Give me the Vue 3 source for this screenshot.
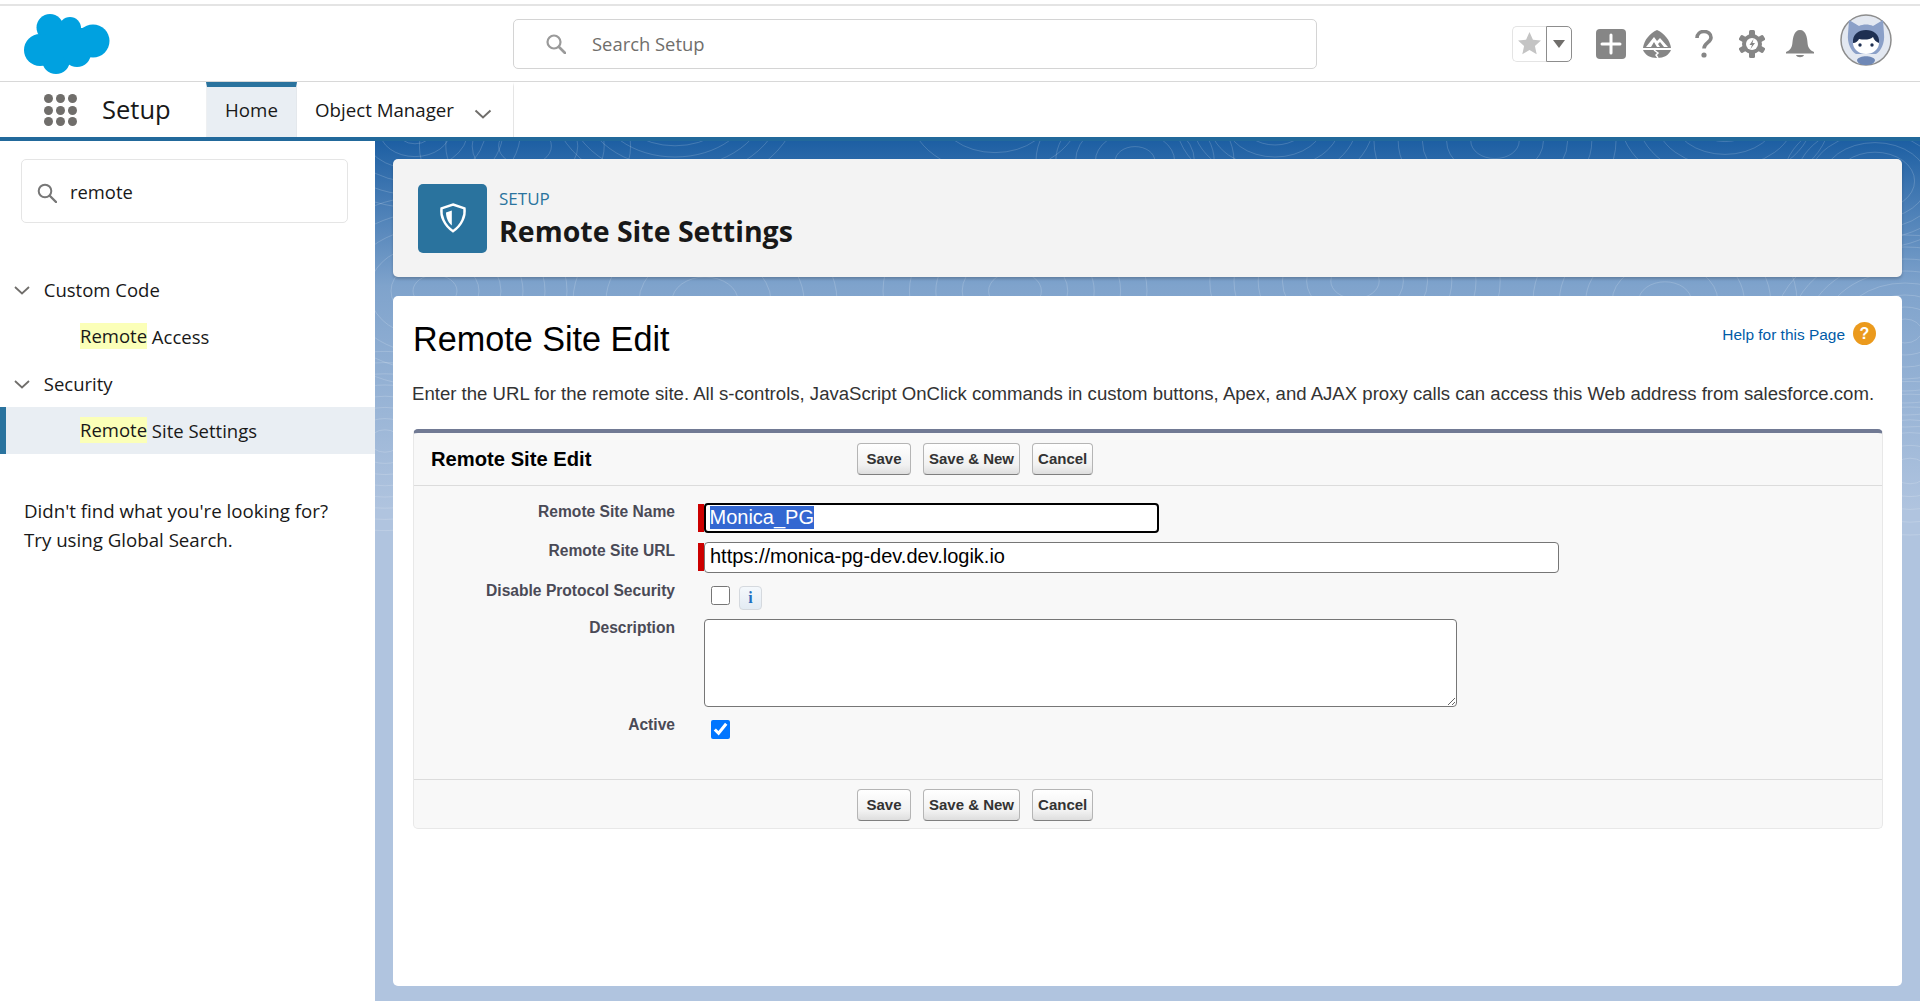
<script setup>
import { ref, onMounted } from 'vue'

// 背景等高线：几组同心椭圆，只在卡片之间的缝隙里露出来
const contours = []
const groups = [
  [40, -10, 6, 16], [150, 5, 4, 24], [300, -40, 8, 14], [620, -30, 3, 26], [760, 20, 5, 18],
  [900, -20, 6, 15], [1120, 0, 5, 22], [1350, -25, 6, 16], [1500, 40, 7, 12],
  [60, 150, 6, 20], [330, 160, 4, 30], [640, 150, 5, 24], [980, 140, 6, 22], [1290, 160, 5, 24], [1530, 190, 8, 15],
  [10, 300, 8, 14], [1535, 330, 7, 16],
]
groups.forEach(([cx, cy, n, step]) => {
  for (let i = 1; i <= n; i++) {
    contours.push({ cx, cy, rx: i * step * 1.1, ry: i * step * 0.8 })
  }
})

const nameInput = ref(null)
onMounted(() => {
  nameInput.value.focus()
  nameInput.value.select()
})
</script>

<template>
  <div class="page">
    <header class="topbar">
      <div class="logo-wrap">
        <svg class="logo" viewBox="0 0 86 60" width="86" height="60" aria-label="Salesforce">
          <g fill="#00a1e0">
            <circle cx="26" cy="13.500" r="13.500" />
            <circle cx="46" cy="14" r="11" />
            <circle cx="69" cy="27" r="16.500" />
            <circle cx="16" cy="36" r="16" />
            <circle cx="32" cy="46" r="14" />
            <circle cx="53" cy="39" r="14" />
            <rect x="22" y="14" width="40" height="28" />
          </g>
        </svg>
      </div>
      <div class="global-search">
        <svg class="gs-icon" viewBox="0 0 20 20" width="20" height="20">
          <circle cx="8" cy="8" r="6.500" fill="none" stroke="#9a9a9a" stroke-width="2.200" />
          <path d="M13 13l6 6" stroke="#9a9a9a" stroke-width="2.600" stroke-linecap="round" />
        </svg>
        <span>Search Setup</span>
      </div>
      <div class="actions">
        <div class="fav">
          <span class="fav-star">
            <svg viewBox="0 0 24 24" width="25" height="25"><path fill="#c4c4c4" d="M12 1l3.300 7.300 7.700.8-5.800 5.300 1.700 7.900-6.900-4.100-6.900 4.100 1.700-7.900L1 9.100l7.700-.8z" /></svg>
          </span>
          <span class="fav-drop"><i></i></span>
        </div>
        <svg class="plus" viewBox="0 0 30 30" width="30" height="30">
          <rect width="30" height="30" rx="4" fill="#868686" />
          <path d="M15 6v18M6 15h18" stroke="#fff" stroke-width="3" stroke-linecap="round" />
        </svg>
        <svg class="trail" viewBox="0 0 30 28" width="30" height="28">
          <path fill="#868686" d="M15 0c7 3 13 10 14 18H1C2 10 8 3 15 0z" />
          <path fill="#fff" d="M4 17l8-10 3 4 3-3 8 9h-4l-4-5-2 2 2 3h-3l-3-5-3 5z" />
          <path fill="#868686" d="M1 20h28c-2 5-7 8-14 8S3 25 1 20z" />
          <path d="M12 20l4 3-2 2 2 3" fill="none" stroke="#fff" stroke-width="1.500" />
        </svg>
        <svg class="help" viewBox="0 0 20 28" width="20" height="28">
          <path d="M3 8c0-4 3-6.500 7-6.500s7 2.500 7 6c0 5-7 5.500-7 11" fill="none" stroke="#868686" stroke-width="3.600" />
          <circle cx="10" cy="25" r="2.600" fill="#868686" />
        </svg>
        <svg class="gear" viewBox="0 0 26 28" width="26" height="28">
          <g fill="#868686">
            <circle cx="13" cy="14" r="10" />
            <rect x="10" y="0" width="6" height="28" rx="1.500" />
            <rect x="10" y="0" width="6" height="28" rx="1.500" transform="rotate(60 13 14)" />
            <rect x="10" y="0" width="6" height="28" rx="1.500" transform="rotate(120 13 14)" />
          </g>
          <circle cx="13" cy="14" r="6" fill="#fff" />
          <path fill="#868686" d="M14.500 9l-4 6h2.500l-1.500 4 4.500-6h-2.500z" />
        </svg>
        <svg class="bell" viewBox="0 0 30 28" width="30" height="28">
          <path fill="#868686" d="M15 0c3 0 5 2 6 5 2 5 1 10 3 13 1 2 3 3 5 4v1.500H1V22c2-1 4-2 5-4 2-3 1-8 3-13 1-3 3-5 6-5z" />
          <path fill="#868686" d="M11 25h8c-1 3-7 3-8 0z" />
        </svg>
        <svg class="avatar" viewBox="0 0 52 52" width="52" height="52">
          <circle cx="26" cy="26" r="25" fill="#e3e8f1" stroke="#8d8d8d" stroke-width="1.500" />
          <path fill="#8ba0c8" d="M9 6l10 6c4-2 10-2 14 0l10-6 1 14c1 9-3 17-8 20H16c-5-3-9-11-8-20z" />
          <path fill="#6f88b6" d="M17 46c2-5 16-5 18 0 0 3-4 5-9 5s-9-2-9-5z" />
          <ellipse cx="26" cy="29" rx="13" ry="11" fill="#fff" />
          <path fill="#1e2f52" d="M13 29c-1-9 6-13 13-13s14 4 13 13c-3-1-5-3-6-6-3 3-9 3-14 2-1 2-3 4-6 4z" />
          <circle cx="20" cy="31" r="1.700" fill="#1e2f52" />
          <circle cx="32" cy="31" r="1.700" fill="#1e2f52" />
        </svg>
      </div>
    </header>

    <nav class="tabbar">
      <div class="launcher">
        <i v-for="n in 9" :key="n"></i>
      </div>
      <span class="app-name">Setup</span>
      <a class="tab active">Home</a>
      <a class="tab">
        Object Manager
        <svg viewBox="0 0 18 10" width="18" height="10"><path d="M1.500 1.500L9 8.500l7.500-7" fill="none" stroke="#706e6b" stroke-width="2" /></svg>
      </a>
    </nav>

    <div class="layout">
      <aside class="sidebar">
        <div class="quickfind">
          <svg viewBox="0 0 20 20" width="20" height="20">
            <circle cx="8" cy="8" r="6.300" fill="none" stroke="#777" stroke-width="2" />
            <path d="M13 13l6 6" stroke="#777" stroke-width="2.400" stroke-linecap="round" />
          </svg>
          <span>remote</span>
        </div>

        <ul class="tree">
          <li class="group">
            <svg viewBox="0 0 16 9" width="16" height="9"><path d="M1 1l7 6.500L15 1" fill="none" stroke="#706e6b" stroke-width="1.800" /></svg>
            Custom Code
          </li>
          <li class="leaf"><mark>Remote</mark> Access</li>
          <li class="group">
            <svg viewBox="0 0 16 9" width="16" height="9"><path d="M1 1l7 6.500L15 1" fill="none" stroke="#706e6b" stroke-width="1.800" /></svg>
            Security
          </li>
          <li class="leaf selected"><mark>Remote</mark> Site Settings</li>
        </ul>

        <p class="notfound">Didn't find what you're looking for?<br />Try using Global Search.</p>
      </aside>

      <main class="content">
        <svg class="topo" width="1545" height="400">
          <ellipse
            v-for="(c, i) in contours"
            :key="i"
            :cx="c.cx"
            :cy="c.cy"
            :rx="c.rx"
            :ry="c.ry"
            fill="none"
            stroke="#fff"
            stroke-opacity=".17"
          />
        </svg>

        <section class="page-head">
          <div class="head-icon">
            <svg viewBox="0 0 30 30" width="30" height="30">
              <path d="M15 1.500l11.500 3.800c1 7.500-2.500 17-11.500 23-9-6-12.500-15.500-11.500-23z" fill="none" stroke="#fff" stroke-width="2.400" />
              <path fill="#fff" d="M13.800 7.500l-5.800 2c0 5 2 10 5.800 13z" />
            </svg>
          </div>
          <div class="head-text">
            <div class="eyebrow">SETUP</div>
            <h1>Remote Site Settings</h1>
          </div>
        </section>

        <section class="card">
          <div class="card-top">
            <h2>Remote Site Edit</h2>
            <a class="help-link"><span class="help-text">Help for this Page</span> <span class="help-dot">?</span></a>
          </div>
          <p class="intro">Enter the URL for the remote site. All s-controls, JavaScript OnClick commands in custom buttons, Apex, and AJAX proxy calls can access this Web address from salesforce.com.</p>

          <div class="block">
            <div class="block-head">
              <h3>Remote Site Edit</h3>
              <div class="btns">
                <button>Save</button>
                <button>Save &amp; New</button>
                <button>Cancel</button>
              </div>
            </div>

            <div class="form">
              <label>Remote Site Name</label>
              <div class="required">
                <input ref="nameInput" class="text name" value="Monica_PG" />
              </div>

              <label>Remote Site URL</label>
              <div class="required">
                <input class="text url" value="https://monica-pg-dev.dev.logik.io" />
              </div>

              <label>Disable Protocol Security</label>
              <div class="check-row">
                <input type="checkbox" />
                <span class="info">i</span>
              </div>

              <label>Description</label>
              <div class="field"><textarea></textarea></div>

              <label>Active</label>
              <div class="check-row">
                <input type="checkbox" checked />
              </div>
            </div>

            <div class="block-foot">
              <div class="btns">
                <button>Save</button>
                <button>Save &amp; New</button>
                <button>Cancel</button>
              </div>
            </div>
          </div>
        </section>
      </main>
    </div>
  </div>
</template>

<style>
html, body { margin: 0; background: #fff; overflow: hidden; }
</style>

<style scoped>
.page {
  height: 1001px;
  display: flex;
  flex-direction: column;
  font-family: "Open Sans", "Noto Sans", sans-serif;
  color: #181818;
}

/* 顶栏 */
.topbar {
  height: 75px;
  margin-top: 4px;
  border-top: 2px solid #e4e4e4;
  border-bottom: 1px solid #d8d8d8;
  display: flex;
  align-items: center;
  flex-shrink: 0;
  background: #fff;
}
.logo-wrap { width: 513px; padding-left: 24px; box-sizing: border-box; flex-shrink: 0; height: 60px; }
.logo { display: block; }
.global-search {
  width: 804px;
  height: 50px;
  box-sizing: border-box;
  display: flex;
  align-items: center;
  gap: 26px;
  padding-left: 32px;
  border: 1px solid #d4d4d4;
  border-radius: 5px;
  color: #706e6b;
  font-size: 18.400px;
}
.global-search span { margin-top: -1px; }
.actions { display: flex; align-items: center; margin-left: 195px; }
.fav { display: flex; height: 36px; }
.fav-star {
  width: 34px;
  box-sizing: border-box;
  display: grid;
  place-items: center;
  border: 1px solid #e4e4e4;
  border-right: 0;
  border-radius: 5px 0 0 5px;
}
.fav-drop {
  width: 26px;
  box-sizing: border-box;
  display: grid;
  place-items: center;
  border: 1px solid #8d8d8d;
  border-radius: 0 5px 5px 0;
}
.fav-drop i { width: 0; height: 0; border: 6px solid transparent; border-top: 8px solid #706e6b; border-bottom: 0; }
.plus { margin-left: 24px; }
.trail { margin-left: 16px; }
.help { margin-left: 22px; }
.gear { margin-left: 25px; }
.bell { margin-left: 20px; }
.avatar { margin-left: 25px; margin-bottom: 7px; }

/* 标签栏 */
.tabbar {
  height: 59px;
  box-sizing: border-box;
  border-bottom: 4px solid #22699b;
  display: flex;
  align-items: stretch;
  flex-shrink: 0;
  padding-left: 44px;
  background: #fff;
}
.launcher {
  width: 33px;
  height: 32px;
  margin-top: 12px;
  display: grid;
  grid-template-columns: repeat(3, 9px);
  grid-auto-rows: 9px;
  justify-content: space-between;
  align-content: space-between;
}
.launcher i { border-radius: 50%; background: #706e6b; }
.app-name { margin-left: 25px; width: 104px; font-size: 25.500px; line-height: 55px; }
.tab {
  display: flex;
  align-items: center;
  font-size: 18.700px;
  border-top: 5px solid transparent;
  height: 55px;
  padding-bottom: 5px;
  box-sizing: border-box;
}
.tab.active {
  width: 91px;
  justify-content: center;
  background: #e9eef3;
  border-top-color: #2a739e;
  border-left: 1px solid #eef0f2;
  border-right: 1px solid #e4e8ec;
}
.tab:not(.active) {
  width: 217px;
  padding-left: 18px;
  box-sizing: border-box;
  border-right: 1px solid #e5e5e5;
}
.tab svg { margin-left: 20px; margin-top: 8px; }

/* 布局 */
.layout { flex: 1; display: flex; min-height: 0; }
.sidebar { width: 375px; flex-shrink: 0; background: #fff; padding-top: 18px; box-sizing: border-box; }
.quickfind {
  margin: 0 27px 0 21px;
  height: 64px;
  box-sizing: border-box;
  border: 1px solid #e5e5e5;
  border-radius: 5px;
  display: flex;
  align-items: center;
  gap: 13px;
  padding-left: 15px;
  font-size: 18.400px;
}
.quickfind svg { margin-top: 3px; }
.tree { list-style: none; margin: 42.500px 0 0; padding: 0; font-size: 18.500px; }
.tree li { height: 47px; display: flex; align-items: center; box-sizing: border-box; white-space: pre; }
.group { padding-left: 14px; }
.group svg { margin-right: 9px; margin-top: 2px; }
.leaf { padding-left: 80px; }
.leaf mark { background: #fbffb8; color: inherit; line-height: 26px; height: 26px; }
.leaf.selected { background: #e9eef3; border-left: 6px solid #2a739e; padding-left: 74px; }
.notfound { margin: 42.500px 0 0 24px; font-size: 18.700px; line-height: 29px; }

/* 主区域 */
.content {
  flex: 1;
  position: relative;
  overflow: hidden;
  padding: 18px 18px 15px;
  box-sizing: border-box;
  display: flex;
  flex-direction: column;
  gap: 19px;
  background: linear-gradient(#1d5fa3 0, #7fa3cc 145px, #b0c4df 370px);
}
.topo { position: absolute; left: 0; top: 0; }
.page-head {
  position: relative;
  height: 118px;
  flex-shrink: 0;
  background: #f3f3f3;
  border-radius: 5px;
  box-shadow: 0 2px 3px rgba(0, 0, 0, .2);
  display: flex;
  align-items: center;
  padding-left: 25px;
  gap: 12px;
}
.head-icon {
  width: 69px;
  height: 69px;
  border-radius: 5px;
  background: #2a739e;
  display: grid;
  place-items: center;
}
.eyebrow { color: #2a739e; font-size: 17px; line-height: 22px; }
.head-text h1 { margin: 4px 0 0; font-size: 28.500px; line-height: 34px; font-weight: 700; color: #181818; }
.card {
  position: relative;
  flex: 1;
  background: #fff;
  border-radius: 5px;
  padding: 23px 19px 0 20px;
  font-family: "Liberation Sans", Arial, sans-serif;
}
.card-top { display: flex; justify-content: space-between; align-items: flex-start; height: 40px; }
.card-top h2 { margin: 0; font-size: 34.200px; line-height: 40px; font-weight: 400; color: #000; }
.help-link { display: flex; align-items: center; gap: 8px; color: #015ba7; font-size: 15.450px; line-height: 24px; margin: 0 7px 0 0; }
.help-text { margin-top: 4px; }
.help-dot {
  width: 23px;
  height: 23px;
  border-radius: 50%;
  background: #eb9a1d;
  color: #fff;
  font-weight: 700;
  font-size: 16px;
  text-align: center;
  line-height: 23px;
}
.intro { margin: 24px 0 24px -1px; font-size: 18.590px; line-height: 22px; color: #333; white-space: nowrap; }

/* 表单块 */
.block {
  background: #f8f8f8;
  border: 1px solid #e8e8e8;
  border-top: 4px solid #717a94;
  border-radius: 5px;
}
.block-head {
  height: 53px;
  box-sizing: border-box;
  display: flex;
  align-items: center;
  border-bottom: 1px solid #dcdcdc;
  padding-left: 17px;
}
.block-head h3 { margin: 0; width: 426px; font-size: 20.200px; font-weight: 700; color: #000; }
.btns { display: flex; gap: 12px; }
.btns button {
  height: 32px;
  box-sizing: border-box;
  padding: 0 5px 1px;
  min-width: 54px;
  border: 1px solid #b5b5b5;
  border-bottom-color: #7f7f7f;
  border-radius: 4px;
  background: linear-gradient(#fff, #f1f1f1 70%, #dedede);
  font: 700 15px "Liberation Sans", Arial, sans-serif;
  color: #333;
}
.form {
  display: grid;
  grid-template-columns: 261px 1fr;
  grid-template-rows: 30px 31px 28px 88px 28px;
  row-gap: 9px;
  column-gap: 23px;
  padding: 17px 0 35px;
}
.form label { text-align: right; padding-top: 1px; font-size: 15.600px; line-height: 16px; font-weight: 700; color: #4a4a56; }
.required { border-left: 6px solid #c00; margin-block: 1px; height: 28px; display: flex; align-items: center; }
.text {
  box-sizing: border-box;
  height: 30px;
  border: 1px solid #767676;
  border-radius: 4px;
  padding: 0 5px 2px;
  font: 20px "Liberation Sans", Arial, sans-serif;
  color: #000;
  background: #fff;
  outline: none;
}
.name { width: 455px; border: 2.500px solid #000; padding: 0 3.500px 2px; }
.name::selection { background: #3367d1; color: #fff; }
.url { width: 855px; height: 31px; }
.field { margin-left: 6px; }
textarea {
  display: block;
  width: 753px;
  height: 88px;
  box-sizing: border-box;
  border: 1px solid #767676;
  border-radius: 4px;
  background: #fff;
}
.check-row { margin-left: 13px; padding-top: 4px; display: flex; align-items: flex-start; gap: 9px; }
.check-row input { width: 19px; height: 19px; margin: 0; accent-color: #0075ff; }
.info {
  width: 23px;
  height: 24px;
  box-sizing: border-box;
  border: 1px solid #d5d9de;
  border-radius: 4px;
  background: linear-gradient(#f4f8fc, #e3ebf3);
  color: #1f6fc0;
  font: 700 16px/22px "Liberation Serif", serif;
  text-align: center;
}
.block-foot {
  height: 49px;
  box-sizing: border-box;
  border-top: 1px solid #dcdcdc;
  padding: 9px 0 0 443px;
}
</style>
